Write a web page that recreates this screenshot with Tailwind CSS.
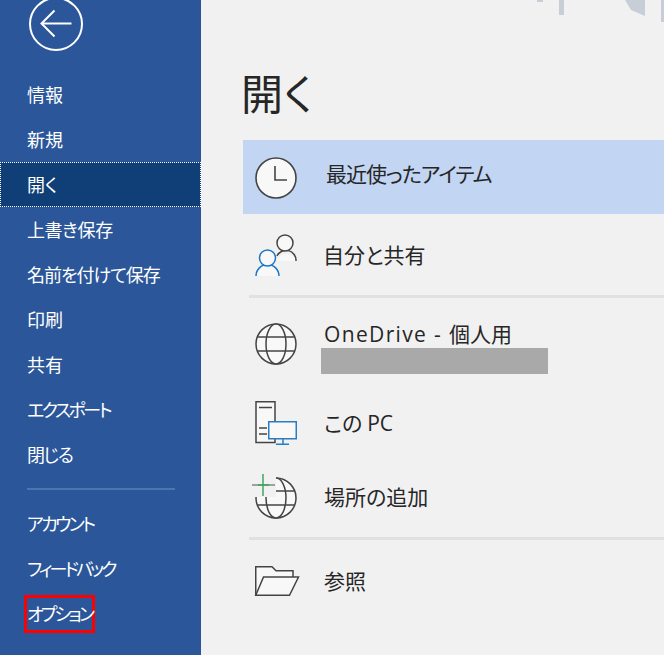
<!DOCTYPE html>
<html lang="ja">
<head>
<meta charset="utf-8">
<script src="https://cdn.jsdelivr.net/npm/@tailwindcss/browser@4"></script>
</head>
<body class="m-0 overflow-hidden">
<div class="relative flex h-[655px] w-[664px] overflow-hidden bg-[#f1f1f1] font-['Noto_Sans_CJK_JP','Noto_Sans',sans-serif] [font-feature-settings:'palt']">
  <aside class="h-full w-[201px] shrink-0 bg-[#2b579a] text-[18px] text-white">
    <div class="flex h-[72px] items-start pl-[29px]">
      <svg width="54" height="54" viewBox="0 0 54 54" class="-mt-[3px] block overflow-visible" fill="none" stroke="#fff">
        <circle cx="27" cy="27" r="26" stroke-width="2"/>
        <path d="M13.5 26.5H42.5" stroke-width="2"/>
        <path d="M25.5 13.5L12.5 26.5L25.5 39.5" stroke-width="2"/>
      </svg>
    </div>
    <nav>
      <div class="flex h-[45px] items-center pl-[27px]">情報</div>
      <div class="flex h-[45px] items-center pl-[27px]">新規</div>
      <div class="flex h-[45px] items-center border border-dotted border-white bg-[#103f78] pl-[26px]">開く</div>
      <div class="flex h-[45px] items-center pl-[27px] tracking-[-0.4px]">上書き保存</div>
      <div class="flex h-[45px] items-center pl-[27px] tracking-[-1px]">名前を付けて保存</div>
      <div class="flex h-[45px] items-center pl-[27px]">印刷</div>
      <div class="flex h-[45px] items-center pl-[27px]">共有</div>
      <div class="flex h-[45px] items-center pl-[27px] tracking-[-2.5px]">エクスポート</div>
      <div class="flex h-[45px] items-center pl-[27px] tracking-[-1.5px]">閉じる</div>
      <div class="my-[11px] ml-[27px] h-[2px] w-[148px] bg-[#4a77b0]"></div>
      <div class="flex h-[45px] items-center pl-[27px] tracking-[-2.6px]">アカウント</div>
      <div class="flex h-[45px] items-center pl-[27px] tracking-[-2.9px]">フィードバック</div>
      <div class="flex h-[45px] items-center pl-[24px] tracking-[-2.8px]"><span class="flex h-[38px] w-[71px] items-center border-[3px] border-[#ff0000] whitespace-nowrap">オプション</span></div>
    </nav>
  </aside>

  <main class="min-w-0 flex-1 pl-[42px] text-[21px] text-[#262626]">
    <h1 class="mb-[24px] -ml-[2px] pt-[68px] text-[42px] leading-[48px] font-normal tracking-[1px]">開く</h1>

    <div class="flex h-[74px] items-center bg-[#c2d5f2] pl-[12px]">
      <svg width="42" height="42" viewBox="0 0 42 42" class="mt-[1px] shrink-0 overflow-visible" fill="none" stroke="#444">
        <circle cx="21" cy="21" r="20" fill="#f8f8f8" stroke-width="1.6"/>
        <path d="M20 9V23H32" stroke-width="1.6"/>
      </svg>
      <span class="ml-[29px] -mt-[7px] whitespace-nowrap tracking-[-1px]">最近使ったアイテム</span>
    </div>

    <div class="flex h-[81px] items-center pl-[12px]">
      <svg width="42" height="42" viewBox="0 0 42 42" class="shrink-0 overflow-visible" fill="none">
        <path d="M22 27A10 10 0 0 1 41 27Z" fill="#f8f8f8"/>
        <path d="M22 22A10 10 0 0 1 41 27" stroke="#444" stroke-width="1.5"/>
        <circle cx="30" cy="9" r="8" fill="#f8f8f8" stroke="#444" stroke-width="1.5"/>
        <path d="M1 42A11.5 11.5 0 0 1 24 42Z" fill="#f8f8f8"/>
        <path d="M1 42A11.5 11.5 0 0 1 24 42" stroke="#1b76c4" stroke-width="1.5"/>
        <circle cx="12.5" cy="24" r="8" fill="#f8f8f8" stroke="#1b76c4" stroke-width="1.5"/>
      </svg>
      <span class="ml-[26px]">自分と共有</span>
    </div>

    <div class="ml-[6px] h-[3px] bg-[#e1e1e1]"></div>

    <div class="flex h-[92px] items-center pl-[12px]">
      <svg width="42" height="42" viewBox="0 0 42 42" class="shrink-0 overflow-visible" fill="#f8f8f8" stroke="#444" stroke-width="1.5">
        <circle cx="21" cy="21" r="20"/>
        <ellipse cx="21" cy="21" rx="10" ry="20"/>
        <path d="M2.5 14H39.5M2.5 28H39.5" fill="none"/>
      </svg>
      <div class="ml-[24px] mt-[7px]">
        <div class="mb-[2px] pl-[3px] leading-[24px] whitespace-nowrap"><span class="font-['Open_Sans',sans-serif] tracking-[1.35px]">OneDrive - </span>個人用</div>
        <div class="h-[26px] w-[227px] bg-[#a9a9a9]"></div>
      </div>
    </div>

    <div class="flex h-[66px] items-center pl-[12px]">
      <svg width="42" height="44" viewBox="0 0 42 44" class="shrink-0 overflow-visible" fill="none">
        <path d="M1 .75H20V41.5H1Z" fill="#f8f8f8" stroke="#444" stroke-width="1.5"/>
        <path d="M4 6.5H17M4 27H12M4 33H12" stroke="#444" stroke-width="1.5"/>
        <rect x="13.75" y="20.75" width="27.5" height="17" fill="#f8f8f8" stroke="#2b7cc4" stroke-width="1.5"/>
        <path d="M28 38V43M21 43.3H34" stroke="#2b7cc4" stroke-width="1.5"/>
      </svg>
      <span class="ml-[27px] whitespace-nowrap">この <span class="font-['Open_Sans',sans-serif]">PC</span></span>
    </div>

    <div class="flex h-[81px] items-center pl-[12px]">
      <svg width="42" height="42" viewBox="0 0 42 42" class="mt-[2px] shrink-0 overflow-visible" fill="#f8f8f8" stroke="#444" stroke-width="1.5">
        <circle cx="21" cy="21" r="20"/>
        <ellipse cx="21" cy="21" rx="10" ry="20"/>
        <path d="M2.5 14H39.5M2.5 28H39.5" fill="none"/>
        <rect x="-4" y="-4" width="25" height="24" fill="#f1f1f1" stroke="none"/>
        <path d="M-3 8H20" stroke="#7c8a80" stroke-width="1.5" />
        <path d="M8 -3V19" stroke="#3fa564" stroke-width="1.5"/>
        <path d="M3 8H14" stroke="#3fa564" stroke-width="1.5"/>
      </svg>
      <span class="ml-[27px]">場所の追加</span>
    </div>

    <div class="ml-[6px] h-[3px] bg-[#e1e1e1]"></div>

    <div class="flex h-[82px] items-center pl-[12px]">
      <svg width="44" height="30" viewBox="0 0 44 30" class="shrink-0 overflow-visible" fill="none" stroke="#444" stroke-width="1.5">
        <path d="M.75 29.25V.75H17L21 4.75H38V11" fill="#f8f8f8"/>
        <path d="M.75 29.25L8.5 11H43.5L34.5 29.25Z" fill="#f8f8f8"/>
      </svg>
      <span class="ml-[25px]">参照</span>
    </div>
  </main>

  <svg width="127" height="23" viewBox="0 0 127 23" class="absolute top-0 right-0" fill="#c7ced8">
    <rect x="0" y="0" width="6" height="2"/>
    <rect x="22" y="0" width="5" height="15"/>
    <path d="M88 0H108V16L94 10Z"/>
    <rect x="124" y="0" width="3" height="22"/>
  </svg>
</div>
</body>
</html>
